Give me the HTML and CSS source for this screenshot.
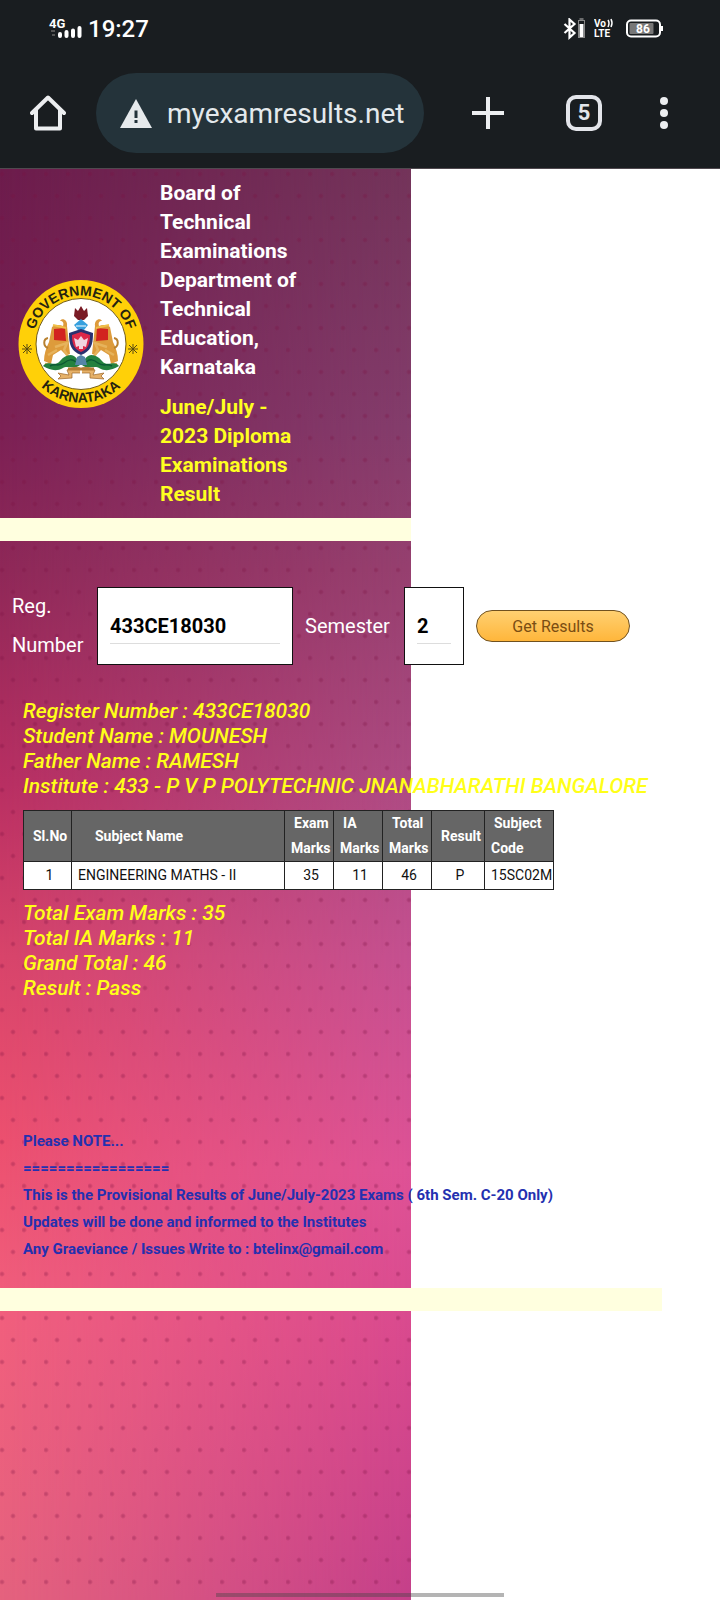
FILE: index.html
```html
<!DOCTYPE html>
<html lang="en">
<head>
<meta charset="utf-8">
<meta name="viewport" content="width=device-width, initial-scale=1">
<title>myexamresults.net</title>
<link rel="stylesheet" href="styles.css">
</head>
<body>
<header class="chrome">
  <div class="status">
    <div class="status-left">
      <svg class="signal" width="32" height="24" viewBox="0 0 32 24">
        <text x="-1" y="11" class="net">4G</text>
        <path d="M1 14h4M2 18h3" stroke="#555" stroke-width="2"/>
        <path d="M10 17v2M16.500 15v4M23 13.500v5.500M29.500 11v8" stroke="#fff" stroke-width="4" stroke-linecap="round"/>
      </svg>
      <time class="clock">19:27</time>
    </div>
    <div class="status-right">
      <svg width="23" height="22" viewBox="0 0 23 22" fill="none">
        <path d="M1.500 6l10 9-5 4.500V1.500l5 4.500-10 9" stroke="#fff" stroke-width="2.200"/>
        <rect x="15.500" y="2.500" width="6" height="17" stroke="#888"/>
        <path d="M16.500 1h4" stroke="#888" stroke-width="1.500"/>
        <rect x="16.500" y="6" width="4" height="13" fill="#fff"/>
      </svg>
      <svg class="volte" width="20" height="22" viewBox="0 0 20 22">
        <text x="0" y="9" class="tiny">Vo</text>
        <path d="M14 2q2 3 0 7M17 1q2 4 0 8" stroke="#fff" stroke-width="1.500" fill="none"/>
        <text x="0" y="19" class="tiny">LTE</text>
      </svg>
      <svg width="37" height="20" viewBox="0 0 37 20">
        <rect x="1" y="1.500" width="33" height="16" rx="4" fill="none" stroke="#fff" stroke-width="2"/>
        <rect x="3.500" y="4" width="24" height="11" rx="1" fill="#777"/>
        <path d="M36 7v5" stroke="#fff" stroke-width="2"/>
        <text x="17" y="14" class="batt">86</text>
      </svg>
    </div>
  </div>
  <nav class="toolbar">
    <button class="icon-btn home" aria-label="Home">
      <svg width="36" height="36" viewBox="0 0 36 36" fill="none" stroke="#eceef0" stroke-width="4" stroke-linecap="round" stroke-linejoin="round">
        <path d="M2 18L18 2.500 34 18"/><path d="M6 15v18.500h24V15"/>
      </svg>
    </button>
    <div class="omnibox">
      <svg width="32" height="29" viewBox="0 0 32 29"><path d="M16 0l16 29H0z" fill="#e6eaec"/><path d="M16 11.500v7.500M16 21v3" stroke="#22323a" stroke-width="3"/></svg>
      <span class="url">myexamresults.net</span>
    </div>
    <div class="actions">
      <button class="icon-btn" aria-label="New tab"><svg width="32" height="32" viewBox="0 0 32 32"><path d="M16 0v32M0 16h32" stroke="#eceef0" stroke-width="4"/></svg></button>
      <button class="tabs" aria-label="Open tabs">5</button>
      <button class="icon-btn" aria-label="Menu"><svg width="8" height="32" viewBox="0 0 8 32" fill="#eceef0"><circle cx="4" cy="4" r="4"/><circle cx="4" cy="16" r="4"/><circle cx="4" cy="28" r="4"/></svg></button>
    </div>
  </nav>
</header>

<main class="page">
  <div class="backdrop"></div>
  <section class="banner">
    <svg class="emblem" viewBox="0 0 126 128" role="img" aria-label="Government of Karnataka">
      <defs>
        <path id="arc-top" d="M14.500 64a48.500 48.500 0 0 1 97 0"/>
        <path id="arc-bottom" d="M4.500 64a58.500 58.500 0 0 0 117 0"/>
        <g id="lion">
          <path d="M49 46c1-6-5-9-7-5 3 0 4 2 3 5-4-2-9-1-11 1l-3 15c-3 6-5 12-5 19l7 3 2-9 8-5 5 5 4-1z" fill="#dd9b3b"/>
          <path d="M30 58c-5 1-5 8 0 10" fill="none" stroke="#b8802f" stroke-width="2"/>
          <path d="M36 49l11-1 1 13-12-1z" fill="#d2231f"/>
          <path d="M37 67l12-4-3 7 5 8M30 75l9-5M27 84l6 1" fill="none" stroke="#e6b35c" stroke-width="2.500"/>
          <path d="M35 45l13 3" stroke="#f0c04a" stroke-width="2"/>
          <path d="M25 86c5-7 11 2 17-5 6-7 13-8 17-2l3 6c-6 5-13 0-17 3-7 4-13 2-20-2z" fill="#23813f"/>
          <path d="M32 86c5-3 9 1 14-3s8-4 12-1" fill="none" stroke="#0c5a35" stroke-width="1.500"/>
          <path d="M62 88c-6-2-10 1-13 2l2 5-11-2 3 3-3 3 14-1v-5l8 0" fill="#e7b269" stroke="#9b6425" stroke-width=".7"/>
        </g>
      </defs>
      <ellipse cx="63" cy="64" rx="62.500" ry="64" fill="#ffd008"/>
      <ellipse cx="63" cy="64" rx="45" ry="45.500" fill="#fff" stroke="#735d18" stroke-width="1"/>
      <text class="ring"><textPath href="#arc-top" startOffset="50%">GOVERNMENT OF</textPath></text>
      <text class="ring"><textPath href="#arc-bottom" startOffset="50%">KARNATAKA</textPath></text>
      <g stroke="#5a4a10" stroke-width="1"><path d="M4 69h10M9 64v10M5 65l8 8M13 65l-8 8M110 69h10M115 64v10M111 65l8 8M119 65l-8 8"/></g>
      <use href="#lion"/><use href="#lion" transform="matrix(-1 0 0 1 126 0)"/>
      <path d="M57 28l3 3 3-5 3 5 3-3 1 8-4 4h-6l-4-4z" fill="#791b25"/>
      <path d="M56 45l7-6 7 6-4 5h-6z" fill="#36a0de"/><path d="M58 46h10" stroke="#fff"/>
      <path d="M51 53l12-4 12 4c0 12-2 18-12 22-10-4-12-10-12-22z" fill="#29316f"/>
      <path d="M54 55l9-3 9 3c0 9-2 14-9 17-7-3-9-8-9-17z" fill="#dc2748"/>
      <path d="M56 58l4 2 3-4 3 4 4-2-2 9-3-1v3h-4v-3l-3 1z" fill="#f1d4df"/>
      <path d="M59 77l4-2 4 2 2 8H57z" fill="#5485a8"/>
      <path d="M50 89h26" stroke="#b47c35" stroke-width="3"/>
    </svg>
    <div class="titles">
      <h1 class="title">Board of Technical Examinations Department of Technical Education, Karnataka</h1>
      <h2 class="title session">June/July - 2023 Diploma Examinations Result</h2>
    </div>
  </section>
  <div class="stripe stripe-top"></div>

  <form class="search" onsubmit="return false">
    <label class="reg-label" for="reg">Reg. Number</label>
    <div class="cell"><input id="reg" class="field reg" type="text" value="433CE18030"></div>
    <label class="sem-label" for="sem">Semester</label>
    <div class="cell"><input id="sem" class="field sem" type="text" value="2"></div>
    <button class="get" type="submit">Get Results</button>
  </form>

  <section class="result">
    <div class="info">
      <div>Register Number : 433CE18030</div>
      <div>Student Name : MOUNESH</div>
      <div>Father Name : RAMESH</div>
      <div>Institute : 433 - P V P POLYTECHNIC JNANABHARATHI BANGALORE</div>
    </div>
    <table class="marks">
      <colgroup><col class="c-no"><col class="c-name"><col class="c-mark"><col class="c-mark"><col class="c-mark"><col class="c-result"><col class="c-code"></colgroup>
      <thead><tr>
        <th class="h-no">Sl.No</th><th class="h-name">Subject Name</th>
        <th><span class="in">Exam</span><br>Marks</th><th><span class="in">IA</span><br>Marks</th>
        <th><span class="in">Total</span><br>Marks</th><th class="h-result">Result</th>
        <th><span class="in">Subject</span><br>Code</th>
      </tr></thead>
      <tbody><tr>
        <td class="num">1</td><td>ENGINEERING MATHS - II</td><td class="num">35</td><td class="num">11</td><td class="num">46</td><td class="num">P</td><td>15SC02M</td>
      </tr></tbody>
    </table>
    <div class="info">
      <div>Total Exam Marks : 35</div>
      <div>Total IA Marks : 11</div>
      <div>Grand Total : 46</div>
      <div>Result : Pass</div>
    </div>
  </section>

  <section class="note">
    <div>Please NOTE...</div>
    <div>=================</div>
    <div>This is the Provisional Results of June/July-2023 Exams ( 6th Sem. C-20 Only)</div>
    <div>Updates will be done and informed to the Institutes</div>
    <div>Any Graeviance / Issues Write to : btelinx@gmail.com</div>
  </section>
  <div class="stripe stripe-bottom"></div>
</main>
<div class="gesture"></div>
</body>
</html>
```
FILE: styles.css
```css
* { box-sizing: border-box; }
body {
  margin: 0;
  min-height: 100vh;
  display: flex;
  flex-direction: column;
  background: #fff;
  font-family: Roboto, "Liberation Sans", sans-serif;
  font-size: 20px;
}
button { font-family: inherit; cursor: pointer; }

.chrome { background: #191d20; border-bottom: 1px solid #50494f; color: #fff; }
.status {
  display: flex;
  justify-content: space-between;
  align-items: center;
  height: 58px;
  padding: 0 56px 0 50px;
}
.status-left { display: flex; align-items: center; gap: 6px; }
.status-right { display: flex; align-items: center; gap: 8px; padding-right: 1px; }
.status-right svg:last-child { margin-left: 4px; }
.clock { font-size: 24px; font-weight: 500; line-height: 32px; }
.net { font-size: 13px; font-weight: 700; fill: #fff; }
.signal { overflow: visible; }
.tiny { font-size: 10px; font-weight: 700; fill: #fff; }
.batt { font-size: 12px; font-weight: 700; fill: #fff; text-anchor: middle; }

.toolbar { display: flex; align-items: center; height: 110px; padding: 0 52px 0 30px; }
.icon-btn { display: flex; padding: 0; border: 0; background: none; }
.omnibox {
  display: flex;
  align-items: center;
  flex: 0 0 auto;
  width: 328px;
  height: 80px;
  margin-left: 30px;
  padding-left: 24px;
  gap: 15px;
  border-radius: 40px;
  background: #24333a;
}
.url { font-size: 28px; color: #e3e9ec; }
.actions { display: flex; flex: 1; align-items: center; justify-content: space-between; margin-left: 48px; }
.tabs {
  width: 36px;
  height: 36px;
  margin-left: 4px;
  padding: 0;
  border: 4px solid #e3e5ea;
  border-radius: 10px;
  background: none;
  color: #e3e5ea;
  font-size: 22px;
  font-weight: 700;
  line-height: 28px;
}

.page { position: relative; flex: 1; isolation: isolate; }
.backdrop {
  position: absolute;
  inset: 0 auto 0 0;
  width: 57.1%;
  z-index: -1;
  background: linear-gradient(#6d1c4c 0%, #7b2054 18%, #8f2858 28%, #b92f62 43%, #d8446a 55%, #ec506f 68%, #f15f7d 80%, #e5627e 100%);
}
.backdrop::before, .backdrop::after { content: ""; position: absolute; inset: 0; }
.backdrop::before {
  background: linear-gradient(#73345a 0%, #843d6c 18%, #96406f 28%, #ad4b83 43%, #c45090 55%, #de5296 70%, #d8498e 82%, #c4408a 100%);
  mask-image: linear-gradient(90deg, transparent, #000);
}
.backdrop::after {
  background-image:
    radial-gradient(circle at 2px 5px, #7b10404d 1px, transparent 3px),
    radial-gradient(circle at 13px 27px, #7b10404d 1px, transparent 3px);
  background-size: 22px 44px;
}

.banner { display: flex; align-items: center; gap: 16px; width: 300px; padding: 10px 0 9px 18px; }
.emblem { flex: none; width: 126px; height: 128px; }
.ring { font: 700 14px "Liberation Sans", sans-serif; fill: #252310; text-anchor: middle; }
.title { margin: 0; font-size: 21px; font-weight: 700; line-height: 29px; color: #fff; }
.session { margin-top: 11px; color: #ffff20; }
.stripe { height: 23px; background: #ffffdf; }
.stripe-top { width: 57.1%; }
.stripe-bottom { width: 92%; }

.search { display: flex; align-items: center; gap: 12px; margin-top: 46px; padding-left: 12px; color: #fff; line-height: 39px; }
.reg-label { width: 73px; }
.sem-label { width: 87px; }
.cell { padding: 20px 12px; border: 1px solid #111; background: #fff; }
.field {
  display: block;
  height: 36px;
  padding: 0;
  border: 0;
  border-bottom: 1px solid #ddd;
  background: #fff;
  color: #000;
  font: 700 20px Roboto, "Liberation Sans", sans-serif;
}
.reg { width: 170px; }
.sem { width: 34px; }
.get {
  width: 154px;
  height: 32px;
  padding: 0;
  border: 1px solid #70511f;
  border-radius: 16px;
  background: linear-gradient(#ffd071, #ffb63b);
  color: #7a4d12;
  font-size: 16px;
}

.result { padding: 34px 0 0 23px; }
.info { font-size: 21px; font-weight: 500; font-style: italic; line-height: 25px; color: #ffff18; white-space: nowrap; }
.marks {
  width: 530px;
  margin: 11px 0 11px;
  border-collapse: collapse;
  table-layout: fixed;
  background: #fff;
  color: #111;
  font-size: 14px;
  line-height: 25px;
}
.marks th, .marks td { padding: 0 0 0 6px; border: 1px solid #222; text-align: left; white-space: nowrap; }
.marks th { background: #666; color: #fff; font-weight: 700; }
.marks .h-no { padding-left: 9px; }
.marks .h-name { padding-left: 23px; }
.marks .h-result { padding-left: 9px; }
.marks .num { padding-left: 4px; text-align: center; }
.marks td { height: 28px; }
.in { padding-left: 3px; }
.c-no { width: 48px; }
.c-name { width: 213px; }
.c-mark { width: 49px; }
.c-result { width: 53px; }
.c-code { width: 69px; }

.note { padding: 127px 0 25px 23px; color: #2430b0; font-size: 15px; font-weight: 700; line-height: 27px; white-space: nowrap; }

.gesture {
  position: fixed;
  left: 30%;
  right: 30%;
  bottom: 3px;
  height: 4px;
  background: #44444466;
}
```
